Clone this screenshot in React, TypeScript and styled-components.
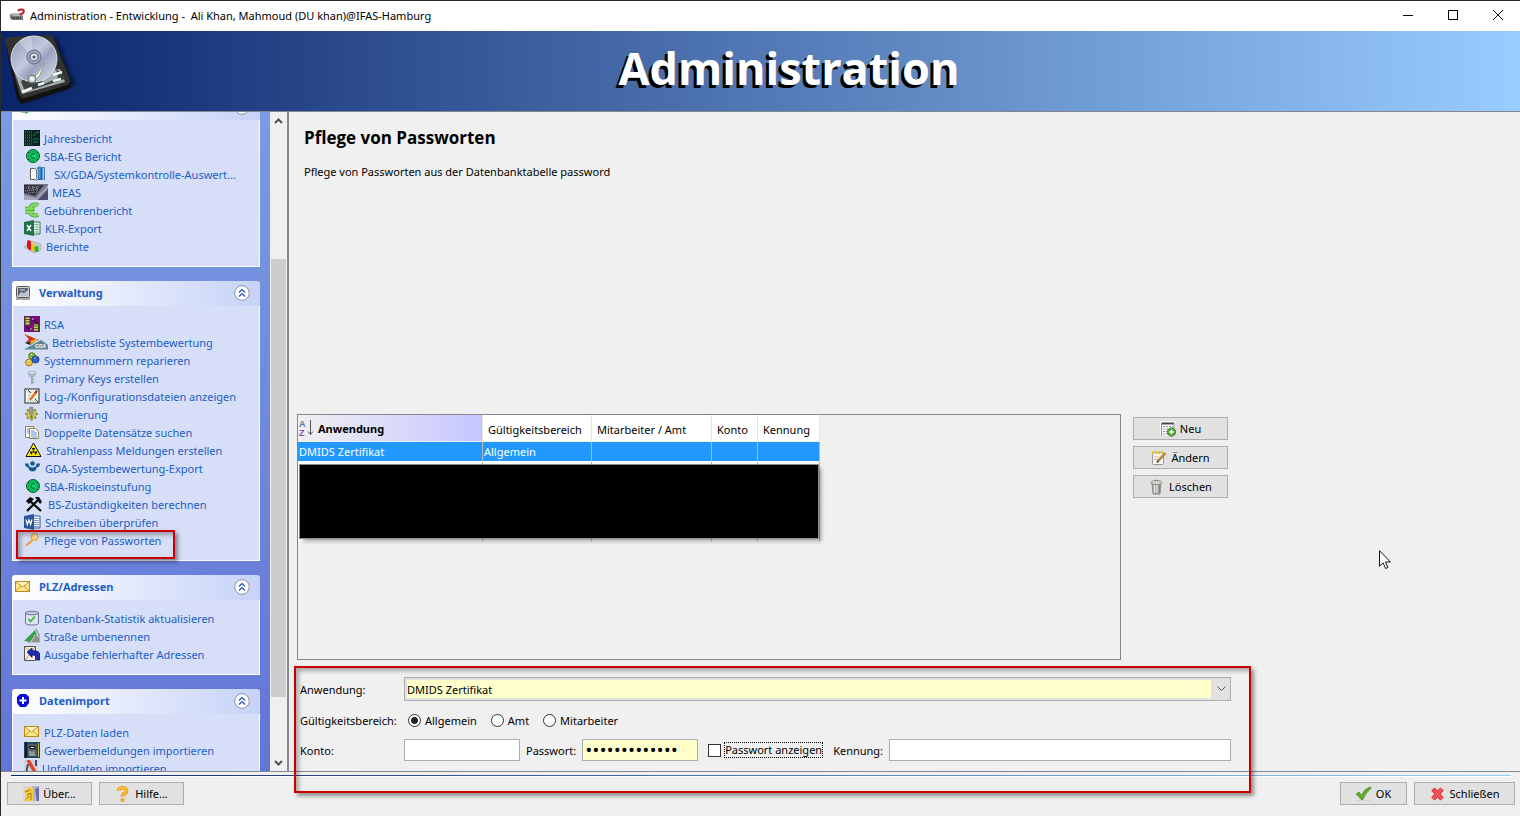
import React, { ReactNode, useLayoutEffect, useRef, useState } from 'react';
import styled, { createGlobalStyle } from 'styled-components';

const GlobalStyle = createGlobalStyle`
  * { box-sizing: border-box; }
  html, body { margin: 0; padding: 0; }
  body, button, input, select {
    font-family: "Noto Sans", "Open Sans", sans-serif;
    font-size: 11px;
    color: #000;
  }
`;

/* ---------- window frame ---------- */

const Window = styled.div`
  position: relative;
  display: flex;
  flex-direction: column;
  height: 100vh;
  min-height: 640px;
  overflow: hidden;
  background: #f0f0f0;
  border-top: 1px solid #2b2430;
  border-left: 1px solid #2b2b2b;
`;

const TitleBar = styled.header`
  display: flex;
  align-items: center;
  height: 30px;
  flex: none;
  padding: 0 0 2px 8px;
  gap: 5px;
  background: #fff;
  white-space: pre;
`;

const WindowControls = styled.div`
  display: flex;
  margin-left: auto;
`;

const WindowButton = styled.button`
  display: grid;
  place-items: center;
  width: 45px;
  height: 28px;
  padding: 0;
  border: 0;
  background: transparent;
`;

const Banner = styled.div`
  position: relative;
  display: flex;
  align-items: center;
  justify-content: center;
  height: 81px;
  flex: none;
  padding-bottom: 6px;
  border-bottom: 1px solid #828790;
  background: linear-gradient(to right, #0a246a, #99ccff);
`;

const BannerImage = styled.div`
  position: absolute;
  left: 0;
  top: 0;
`;

const BannerTitle = styled.h1`
  margin: 0;
  padding-left: 57px;
  font-family: "Open Sans", "Noto Sans", sans-serif;
  font-size: 45px;
  line-height: 74px;
  font-weight: 700;
  color: #fff;
  text-shadow: -3px 3px 0 #000;
`;

/* ---------- body ---------- */

const Body = styled.div`
  display: flex;
  flex: 1;
  min-height: 0;
`;

const Sidebar = styled.nav`
  display: flex;
  flex: none;
  width: 288px;
  border-right: 2px solid #828790;
`;

const TaskPane = styled.div`
  flex: 1;
  overflow: hidden;
  padding: 12px 10px 12px 11px;
  display: flex;
  flex-direction: column;
  gap: 14px;
  background: linear-gradient(to bottom, #7a9ae3, #6375d6);
`;

const ScrollBar = styled.div`
  display: flex;
  flex-direction: column;
  width: 17px;
  background: #f0f0f0;
`;

const ScrollArrow = styled.button`
  display: grid;
  place-items: center;
  height: 17px;
  padding: 0;
  border: 0;
  background: transparent;
`;

const ScrollTrack = styled.div`
  display: grid;
  flex: 1;
  padding: 0 1px;
  grid-template-rows: 130fr 438fr 57fr;
`;

const ScrollThumb = styled.div`
  grid-row: 2;
  background: #cdcdcd;
`;

const Group = styled.section`
  flex: none;
`;

const GroupHeader = styled.h2`
  display: flex;
  align-items: center;
  height: 25px;
  margin: 0;
  padding: 0 10px 1px 3px;
  gap: 8px;
  border-radius: 3px 3px 0 0;
  background: linear-gradient(to right, #fff, #c6d3f7);
  font-size: 11px;
  line-height: 18px;
  font-weight: 700;
  color: #215dc6;
`;

const CollapseButton = styled.button`
  display: grid;
  margin-left: auto;
  padding: 0;
  border: 0;
  background: transparent;
`;

const GroupBody = styled.ul`
  margin: 0;
  padding: 10px 0 10px 11px;
  list-style: none;
  border: 1px solid #fff;
  border-top: 0;
  background: #d6dff7;
`;

const Task = styled.li`
  position: relative;
  height: 18px;
`;

const TaskLink = styled.a`
  display: flex;
  gap: 4px;
  line-height: 18px;
  white-space: nowrap;
  color: #215dc6;
  text-decoration: none;
  svg { flex: none; }
`;

const Mark = styled.div`
  position: absolute;
  z-index: 2;
  border: 2px solid #c80000;
  box-shadow: 3px 3px 4px rgba(0, 0, 0, 0.4), inset 3px 3px 4px rgba(0, 0, 0, 0.3);
  pointer-events: none;
`;

const TaskMark = styled(Mark)`
  left: -8px;
  top: -2px;
  width: 159px;
  height: 29px;
`;

/* ---------- main ---------- */

const Main = styled.main`
  display: flex;
  flex-direction: column;
  flex: 1;
  min-width: 0;
  padding: 14px 20px 10px 8px;
`;

const Intro = styled.div`
  flex: 1;
  padding-left: 7px;
`;

const PageTitle = styled.h2`
  margin: 0;
  font-family: "Open Sans", "Noto Sans", sans-serif;
  font-size: 17px;
  line-height: 24px;
  font-weight: 700;
`;

const Description = styled.p`
  margin: 14px 0 0;
  line-height: 16px;
`;

const ListArea = styled.div`
  display: flex;
  gap: 12px;
`;

const TableBox = styled.div`
  position: relative;
  flex: 0 1 824px;
  height: 246px;
  border: 1px solid #828790;
`;

const Table = styled.table`
  border-collapse: separate;
  border-spacing: 0;
  table-layout: fixed;
  width: 522px;
`;

const HeadCell = styled.th<{ $sorted?: boolean }>`
  height: 27px;
  padding: ${p => (p.$sorted ? '0 0 0 1px' : '2px 0 0 5px')};
  text-align: left;
  white-space: nowrap;
  font-weight: ${p => (p.$sorted ? 700 : 400)};
  background: ${p => (p.$sorted ? 'linear-gradient(to right, #f0f0f0, #c6c6ff)' : '#fff')};
  border-right: 1px solid #e5e5e5;
  border-bottom: 1px solid #f0f0f0;
`;

const SortLabel = styled.span`
  display: flex;
  align-items: center;
  gap: 4px;
`;

const Row = styled.tr<{ $selected?: boolean }>`
  height: 20px;
  color: ${p => (p.$selected ? '#fff' : '#000')};
  background: ${p => (p.$selected ? '#2199ff' : '#fff')};
`;

const Cell = styled.td`
  padding: 0 1px;
  line-height: 18px;
  border-right: 1px solid #b8b8b8;
  border-bottom: 1px solid #fff;
`;

const BlackedOut = styled.div`
  position: absolute;
  left: 2px;
  top: 50px;
  width: 518px;
  height: 73px;
  background: #000;
  box-shadow: 0 0 0 1px #8c8c8c, 3px 3px 4px rgba(0, 0, 0, 0.4);
`;

const ButtonColumn = styled.div`
  display: flex;
  flex-direction: column;
  gap: 6px;
  padding-top: 3px;
`;

const PushButton = styled.button<{ $width: number }>`
  display: flex;
  align-items: center;
  justify-content: center;
  gap: 4px;
  width: ${p => p.$width}px;
  height: 23px;
  padding: 0;
  border: 1px solid #adadad;
  background: #e1e1e1;
`;

const Form = styled.form`
  position: relative;
  display: grid;
  grid-template-columns: 104px 1fr;
  align-items: center;
  row-gap: 8px;
  max-width: 934px;
  margin-top: 17px;
  padding-left: 3px;
`;

const FormMark = styled(Mark)`
  left: -3px;
  right: -20px;
  top: -11px;
  bottom: -32px;
`;

const FormRow = styled.div`
  display: flex;
  align-items: center;
  height: 22px;
`;

const ComboWrap = styled.div`
  position: relative;
  display: flex;
  height: 24px;
  border: 1px solid #adadad;
  background: #e1e1e1;
  padding: 2px;
`;

const Combo = styled.select`
  flex: 1;
  appearance: none;
  border: 0;
  border-radius: 0;
  padding: 0;
  height: 18px;
  background: linear-gradient(#ffffcc, #ffffcc) left / calc(100% - 17px) 100% no-repeat;
`;

const ComboArrow = styled.svg`
  position: absolute;
  right: 4px;
  top: 8px;
  pointer-events: none;
`;

const Choice = styled.label<{ $indent?: boolean }>`
  display: flex;
  align-items: center;
  gap: 4px;
  margin: 0 ${p => (p.$indent ? 5 : 10)}px 0 ${p => (p.$indent ? 10 : 4)}px;
  white-space: nowrap;
`;

const Radio = styled.input`
  appearance: none;
  width: 13px;
  height: 13px;
  margin: 0;
  border: 1px solid #333;
  border-radius: 50%;
  background: #fff;
  &:checked { background: radial-gradient(circle, #222 3px, #fff 4px); }
`;

const CheckBox = styled.input`
  appearance: none;
  width: 13px;
  height: 13px;
  margin: 0;
  border: 1px solid #333;
  background: #fff;
`;

const FocusedText = styled.span`
  outline: 1px dotted #000;
  line-height: 14px;
`;

const TextField = styled.input<{ $required?: boolean; $grow?: boolean }>`
  ${p => (p.$grow ? 'flex: 1; min-width: 0;' : 'width: 116px;')}
  height: 22px;
  padding: 0 2px;
  border: 1px solid #abadb3;
  border-radius: 0;
  background: ${p => (p.$required ? '#ffffcc' : '#fff')};
  &[type='password'] {
    font-family: "Open Sans", sans-serif;
    font-size: 19px;
  }
`;

const FieldLabel = styled.label<{ $inline?: boolean }>`
  white-space: nowrap;
  margin: ${p => (p.$inline ? '0 6px' : '0')};
`;

/* ---------- footer ---------- */

const Footer = styled.footer`
  flex: none;
  padding: 3px 5px 11px 6px;
  border-top: 1px solid #828790;
`;

const Rule = styled.div`
  height: 2px;
  margin: 0 4px 5px;
  background: linear-gradient(to right, #0a246a, #99ccff) top / 100% 1px no-repeat, #fff;
`;

const FooterButtons = styled.div`
  display: flex;
  gap: 7px;
`;

const Spring = styled.span`
  flex: 1;
`;

const Pointer = styled.svg`
  position: absolute;
  right: 128px;
  top: 549px;
`;

/* ---------- icons ---------- */

const Svg = ({ w = 16, h = 16, children }: { w?: number; h?: number; children: ReactNode }) => (
  <svg width={w} height={h} viewBox={`0 0 ${w} ${h}`} aria-hidden="true">{children}</svg>
);

const icons: Record<string, ReactNode> = {
  chip: (
    <Svg>
      <rect width="16" height="16" fill="#07241f" />
      <path d="M1.500 1v14M5.500 1v14" stroke="#0a7a4a" strokeDasharray="2 1" />
      <path d="M3.500 1v14" stroke="#c01818" strokeDasharray="3 1" />
      <path d="M7.500 1v14" stroke="#1c2fc0" />
      <path d="M9 6l3-3 3-1M9 9h6M9 12h5" stroke="#12806c" fill="none" />
    </Svg>
  ),
  seal: (
    <Svg>
      <circle cx="9" cy="8" r="6.500" fill="#0ccb62" stroke="#0b5c33" />
      <circle cx="9" cy="8" r="4.300" fill="#14d870" stroke="#0a8a46" strokeWidth=".8" />
      <path d="M10.800 6.400a2.300 2.300 0 1 0 0 3.200" stroke="#066a35" strokeWidth="1.200" fill="none" />
      <path d="M4 5l1-1M13 4l1 1M4 11l1 1M14 11l-1 1" stroke="#04361c" />
    </Svg>
  ),
  book: (
    <Svg w={26}>
      <path d="M6.500 2.500h4l2 1 1-1h4v11h-4l-1 1-1-1h-5z" fill="#fff" stroke="#5c5a4c" />
      <path d="M12.500 4v9" stroke="#777" />
      <path d="M8 5h3M8 7h3M8 9h3" stroke="#e2e2da" />
      <path d="M14 1h3v13l-1.500-1.500L14 14z" fill="#4a9ae6" stroke="#155a9c" strokeWidth=".7" />
      <path d="M18 1.500h2.500V14L19 12.500 18 13.500z" fill="#9cc9f2" stroke="#155a9c" strokeWidth=".7" />
    </Svg>
  ),
  keyboard: (
    <Svg w={24}>
      <rect width="24" height="16" fill="#77778b" />
      <path d="M0 1h20L11 12 0 9z" fill="#34343f" />
      <path d="M2 4l14-1M1 7l13-2M4 9l9-1M5 2v5M9 2v6M13 2v5" stroke="#9a9aab" strokeDasharray="1 1" />
      <path d="M0 11l12 3L24 1v3L13 16H0z" fill="#a3a4bd" />
      <path d="M14 16L24 6v10z" fill="#4c4c70" />
    </Svg>
  ),
  euro: (
    <Svg>
      <path d="M14 3.500A5.500 5.500 0 1 0 14 12.500M1 6.700h10M1 9.700h9" stroke="#4aa335" strokeWidth="4" fill="none" />
      <path d="M14 3.500A5.500 5.500 0 1 0 14 12.500M1 6.700h10M1 9.700h9" stroke="#86d766" strokeWidth="2.600" fill="none" />
      <path d="M4 8.200h6" stroke="#3f9c2c" strokeWidth=".6" />
    </Svg>
  ),
  excel: (
    <Svg w={17}>
      <path d="M9 2h7v12H9z" fill="#fff" stroke="#1f7346" />
      <path d="M10 4.500h5M10 7h5M10 9.500h5M10 12h5M13 3v10" stroke="#7fb898" />
      <path d="M0 2l10-2v16L0 14z" fill="#1f7346" />
      <path d="M3 5l4 6M7 5l-4 6" stroke="#fff" strokeWidth="1.400" />
    </Svg>
  ),
  chart: (
    <Svg w={18}>
      <path d="M0 9l8-6 9 3v6l-7 3z" fill="#c9c7c7" stroke="#a9a7a7" strokeWidth=".6" />
      <path d="M3 9V3.500q1.500-3 4 0V12q-2 1-4-3z" fill="#d8141c" />
      <path d="M7 11V6.500q1.500-2 3.500 0V13q-2 1-3.500-2z" fill="#f2c410" />
      <path d="M10.500 13V9q2-2 4 0v4.500q-2 1.500-4-.5z" fill="#2fb32b" />
    </Svg>
  ),
  monitor: (
    <Svg>
      <rect x="1.500" y="1.500" width="13" height="11" rx="1" fill="#d2d2cf" stroke="#555" />
      <rect x="3" y="3" width="10" height="8" fill="#5b616b" />
      <path d="M3 11l3-4 3 1 4-3v6z" fill="#b9c4cf" />
      <path d="M5 5h5" stroke="#dfe7ee" />
      <path d="M1 14h14" stroke="#8a8a84" strokeWidth="1.500" />
    </Svg>
  ),
  rsa: (
    <Svg>
      <rect width="16" height="16" fill="#7a0a80" />
      <rect x="1" y="1" width="5" height="8" fill="#c6cf66" stroke="#32400a" strokeWidth=".8" />
      <rect x="9.500" y="8" width="5" height="7" fill="#c6cf66" stroke="#32400a" strokeWidth=".8" />
      <path d="M1 3.500h5M1 6h5M9.500 10h5M9.500 12.500h5" stroke="#4f5c14" />
      <path d="M8 3l6 4M2 11l5 3" stroke="#111" />
      <path d="M8 3h1.500M6 13h1.500" stroke="#fff" />
    </Svg>
  ),
  gda: (
    <Svg w={24}>
      <path d="M1 9l14-4-9 6z" fill="#111" />
      <path d="M3 1l11 5-9 5 3-5z" fill="#f3c313" />
      <path d="M0 0l12 5-11 4 4-4z" fill="#e0261c" />
      <path d="M0 15.500L17 6l7 5v4.500z" fill="#5c8792" />
      <text x="11" y="14" fontFamily="Liberation Sans" fontSize="5" fontWeight="700" fill="#fff">GDA</text>
    </Svg>
  ),
  cubes: (
    <Svg>
      <circle cx="8" cy="4" r="3.300" fill="#86bd2b" stroke="#476f12" strokeWidth=".8" />
      <circle cx="5" cy="10.500" r="3.500" fill="#ecc33c" stroke="#8c6a10" strokeWidth=".8" />
      <circle cx="11.500" cy="7.500" r="3.600" fill="#2e65c8" stroke="#123a86" strokeWidth=".8" />
      <path d="M7 3l1-1M4 9l1-1M10.500 6.500l1-1" stroke="#fff" />
    </Svg>
  ),
  key: (
    <Svg>
      <rect x="4" y="1" width="8" height="6" rx="2" fill="#a4bdc4" />
      <rect x="6" y="2" width="4" height="1.500" fill="#dce6ec" />
      <path d="M7 7h2v7H7z" fill="#93abb2" />
      <path d="M9 9.500h1.500M9 12h1.500" stroke="#93abb2" />
    </Svg>
  ),
  log: (
    <Svg>
      <rect x="1" y="1" width="14" height="14" fill="#fff" stroke="#222" />
      <path d="M3 4h10M3 7h10M3 10h10M3 13h10M5 2v12" stroke="#a8ccb4" strokeWidth=".7" />
      <path d="M4 2l3 3M11 11l3 3" stroke="#333" />
      <path d="M6 12l6-8" stroke="#e5761c" strokeWidth="2.500" />
      <path d="M11.500 5L13 2.500" stroke="#a52a12" strokeWidth="2" />
    </Svg>
  ),
  gear: (
    <Svg>
      <path d="M7.500 1.500v13M1 8h13M3 3.500l9 9M12 3.500l-9 9" stroke="#8f8a2c" strokeWidth="2.200" />
      <circle cx="7.500" cy="8" r="4.800" fill="#cfc95a" stroke="#8f8a2c" strokeWidth=".6" />
      <rect x="5.500" y="1" width="3.500" height="7.500" rx="1" fill="#9a9a96" stroke="#6d6d68" strokeWidth=".5" />
      <circle cx="7.500" cy="10.500" r="1.200" fill="#6e691f" />
    </Svg>
  ),
  pages: (
    <Svg>
      <path d="M1.500 2.500h8v11h-8z" fill="#fff" stroke="#8b8750" />
      <path d="M5.500 4.500h6l3 3v7h-9z" fill="#fffef0" stroke="#8b8750" />
      <path d="M7 7h4M7 9h6M7 11h6M7 13h6M3 5h2M3 7h2M3 9h2" stroke="#5c8de0" />
    </Svg>
  ),
  radiation: (
    <Svg w={18}>
      <path d="M9.500 1L17 14.500H2z" fill="#ffe60a" stroke="#111" strokeLinejoin="round" />
      <path d="M9.500 9.500L7.800 6h3.400zM9.500 9.500H5.600l1.700 3.600zM9.500 9.500h3.900l-1.700 3.600z" fill="#111" />
      <circle cx="9.500" cy="9.500" r="1.200" fill="#111" stroke="#ffe60a" strokeWidth=".6" />
    </Svg>
  ),
  dguv: (
    <Svg w={17}>
      <path d="M1 3.500h3.500q0 4 4 4t4-4H16q0 3.500-3.300 4-.7 4-4.200 4T4.300 7.500Q1 7 1 3.500z" fill="#155a8c" />
      <circle cx="8.500" cy="3.500" r="2.300" fill="#155a8c" />
    </Svg>
  ),
  hammers: (
    <Svg w={20}>
      <path d="M5 4l12 11M14 4L3 15" stroke="#0a0a0a" strokeWidth="2.200" />
      <path d="M2 5l4-4 4 2-5 5zM11 1h4l3 5-2 2z" fill="#0a0a0a" />
    </Svg>
  ),
  word: (
    <Svg w={17}>
      <path d="M9 2h7v12H9z" fill="#fff" stroke="#2b579a" />
      <path d="M10 4.500h5M10 6.500h5M10 8.500h5M10 10.500h5M10 12.500h5" stroke="#7d9ccd" />
      <path d="M0 2l10-2v16L0 14z" fill="#2b579a" />
      <path d="M2 5.500l1.300 5L5 6l1.600 4.500L8 5.500" stroke="#fff" strokeWidth="1.200" fill="none" />
    </Svg>
  ),
  goldKey: (
    <Svg>
      <path d="M2 13.500l7-6" stroke="#e9a04a" strokeWidth="2" />
      <path d="M3 12l1.500 2M5 10l1.500 2" stroke="#e9a04a" />
      <circle cx="10.500" cy="5" r="3.500" fill="#fbcf7c" stroke="#e9993a" />
      <circle cx="11.500" cy="4" r="1.100" fill="#fff3d6" />
    </Svg>
  ),
  mail: (
    <Svg>
      <rect x=".5" y="2.500" width="14" height="10" fill="#ffe68a" stroke="#b98a1c" />
      <path d="M1 3l6.500 5L14 3M1 12l5-5M14 12L9 7" stroke="#c9962a" fill="none" />
      <path d="M2 3h11L7.500 7z" fill="#fff8cf" />
    </Svg>
  ),
  database: (
    <Svg>
      <path d="M1.500 3v10q0 2 6.500 2t6.500-2V3z" fill="#dfe3f2" stroke="#6f7695" />
      <ellipse cx="8" cy="3" rx="6.500" ry="1.800" fill="#c3c9de" stroke="#6f7695" />
      <path d="M4.500 9l2 2.500L11 6.500" stroke="#27b834" strokeWidth="1.600" fill="none" />
    </Svg>
  ),
  road: (
    <Svg>
      <path d="M3 14.500L9 6l4 .5 2.500 8z" fill="#8c948c" />
      <path d="M0 13l5-5 6-6 1.500 4-7 7.500z" fill="#2fa545" />
      <path d="M12 1l3 6v7" stroke="#73816c" fill="none" />
      <path d="M7 14l4-7" stroke="#e5e8e2" strokeDasharray="2 1" />
    </Svg>
  ),
  returnMail: (
    <Svg>
      <path d="M.5.500h11v14H.5z" fill="#fbf3e1" stroke="#555" />
      <path d="M1 1l6 5 4-5M1 14l5-6" stroke="#a89472" fill="none" />
      <path d="M3 6l5-4v2.500q8 0 8 4.500v5h-4q1-5-4-5v2.500z" fill="#1b2cb8" stroke="#0a1060" strokeWidth=".7" />
    </Svg>
  ),
  plus: (
    <Svg>
      <path d="M5 1h6l3 3v6l-3 4H5l-3-4V4z" fill="#0a0ad8" />
      <path d="M8 4v7M4.500 7.500h7" stroke="#fff" strokeWidth="2" />
    </Svg>
  ),
  trade: (
    <Svg>
      <rect width="16" height="16" fill="#22465c" />
      <path d="M2 0v16" stroke="#0b1e2c" strokeWidth="2" />
      <rect x="4" y="2" width="9" height="12" fill="#4d5a60" />
      <path d="M5 14V8l3 2 2-2 2 6z" fill="#8f989b" />
      <path d="M5 4h6l1 3H6z" fill="#1c1f22" />
      <path d="M7 5.500h3" stroke="#fff" />
      <path d="M14.500 1v14" stroke="#b9c24b" />
    </Svg>
  ),
  accident: (
    <Svg w={14}>
      <rect width="14" height="16" fill="#cfd3dc" />
      <path d="M4 0l8 14" stroke="#e0452b" strokeWidth="3.500" />
      <path d="M1.500 16L4 4M12 0v6" stroke="#444c66" strokeWidth="2" />
    </Svg>
  ),
  reports: (
    <Svg>
      <path d="M4 9h9l-3 5H6z" fill="#b9bcc4" />
      <path d="M8 11l6-1v3l-3 2z" fill="#39b54a" />
    </Svg>
  ),
  add: (
    <Svg>
      <rect x=".5" y=".5" width="14" height="14" fill="#fff" stroke="#f6f6f6" />
      <path d="M2 2.500h12" stroke="#3d4759" strokeWidth="2" />
      <path d="M3 5.500h10M3 8h8M3 10.500h6M3 13h5" stroke="#8a93a5" strokeDasharray="2 1" />
      <path d="M1.500 2v13M14 2v7" stroke="#8a93a5" />
      <circle cx="11.500" cy="11" r="4.300" fill="#4f9c2f" stroke="#33701b" strokeWidth=".6" />
      <path d="M11.500 8.500v5M9 11h5" stroke="#fff" strokeWidth="1.500" />
    </Svg>
  ),
  edit: (
    <Svg>
      <rect x="1.500" y="2.500" width="11" height="12" rx="1" fill="#f4f4f0" stroke="#9a9a92" />
      <path d="M1 2.500h12" stroke="#e8c53a" strokeWidth="3" strokeDasharray="2 1" />
      <path d="M3 7h5M3 9.500h4" stroke="#c0c0ba" />
      <path d="M7 11l7.500-8" stroke="#b9812e" strokeWidth="2.500" />
      <path d="M6 12.500l1.500-2" stroke="#333" strokeWidth="1.500" />
    </Svg>
  ),
  trash: (
    <Svg>
      <path d="M3 4h9l-1 11H4z" fill="#a9a9a4" stroke="#7c7c78" strokeWidth=".8" />
      <path d="M5.500 6v8M8 6v8" stroke="#e9e9e6" strokeWidth="1.200" />
      <path d="M10.200 6v8" stroke="#7d7d79" />
      <ellipse cx="7.500" cy="3.500" rx="5.500" ry="2" fill="#d5d5d2" stroke="#7c7c78" strokeWidth=".8" />
      <path d="M6 2q1.500-2 3 0" stroke="#7c7c78" fill="none" />
    </Svg>
  ),
  about: (
    <Svg>
      <rect x="0" y="0" width="16" height="16" fill="#d9d9dd" />
      <path d="M9 0h7v15h-5z" fill="#b3b3d2" />
      <path d="M12 3l2 12h2V1z" fill="#6b6ba8" />
      <path d="M1 5l5-4 5 1-1 5 1 8H1l2-6z" fill="#f2cb3d" />
      <path d="M2 6l5-2M4 9l4-2v7M3 13l3-3" stroke="#9d7b1a" fill="none" />
    </Svg>
  ),
  help: (
    <Svg>
      <path d="M3.500 5q0-3 4-3t4 3q0 1.800-2 2.700T7.500 10.500" stroke="#d98a10" strokeWidth="3.600" fill="none" />
      <path d="M3.500 5q0-3 4-3t4 3q0 1.800-2 2.700T7.500 10.500" stroke="#fdbb30" strokeWidth="2.600" fill="none" />
      <circle cx="7.500" cy="14" r="1.800" fill="#fdb428" stroke="#d98a10" strokeWidth=".5" />
    </Svg>
  ),
  ok: (
    <Svg>
      <path d="M1 14.500h13" stroke="#cfcfcf" />
      <path d="M0 8l3-2 2.500 3Q8 3 14 1l1.500 1Q10 6 7 13.500H5Q3.500 11 0 8z" fill="#5fae2b" stroke="#3d8416" strokeWidth=".6" />
    </Svg>
  ),
  cancel: (
    <Svg>
      <path d="M3 3l9 10M12 3L3 13" stroke="#c21f24" strokeWidth="4.600" strokeLinejoin="round" />
      <path d="M3 3l9 10M12 3L3 13" stroke="#f0555a" strokeWidth="3.200" />
    </Svg>
  ),
};

const HardDisk = () => (
  <svg width="78" height="80" viewBox="0 0 78 80" aria-hidden="true">
    <defs>
      <linearGradient id="platter" x1="0" y1="0" x2="1" y2="1">
        <stop offset="0" stopColor="#8d96b4" />
        <stop offset=".45" stopColor="#c3c9dc" />
        <stop offset=".6" stopColor="#9aa2c0" />
        <stop offset="1" stopColor="#dfe4ee" />
      </linearGradient>
      <filter id="soft"><feGaussianBlur stdDeviation="2" /></filter>
    </defs>
    <path d="M9 12L55 7l19 47-50 17z" fill="#020a24" filter="url(#soft)" opacity=".8" />
    <path d="M4 10q0-3 4-4l40-2q3 0 5 4l16 41q1 4-3 6L24 68q-4 1-6-4z" fill="#34322f" />
    <path d="M4 10l14 53q2 5 6 4l42-13q4-2 3-5l1 5q0 3-3 4L24 72q-5 2-8-4z" fill="#111" />
    <path d="M13 40l8 23 43-12-5-13-22 3z" fill="#a2afb0" />
    <path d="M20 50l8-5 4 6 8-4 3 6 14-6-2-8 6 2 3 7-40 13z" fill="#3d4443" />
    <path d="M21 61l10-4M52 44l9-3M37 54l6-2M52 50l8-2" stroke="#f1f8ee" strokeWidth="2.500" />
    <circle cx="33" cy="28" r="23" fill="url(#platter)" stroke="#dce1ee" />
    <path d="M33 28L18 11a23 23 0 0 1 12-6z" fill="#e3e7f0" opacity=".4" />
    <circle cx="33" cy="26" r="7" fill="#9ba4ba" stroke="#666f87" />
    <circle cx="33" cy="26" r="4" fill="#dde3e9" stroke="#67706f" />
    <circle cx="33" cy="26" r="1.500" fill="#4e565f" />
    <path d="M31 48l5-5 7-11-4 12-5 6z" fill="#e5ecda" stroke="#8a937d" strokeWidth=".7" />
    <circle cx="31" cy="48" r="4" fill="#cbd5d0" stroke="#687270" />
    <circle cx="31" cy="48" r="1.500" fill="#fff" />
  </svg>
);

const Chevrons = () => (
  <Svg>
    <circle cx="8" cy="8" r="7.300" fill="#fff" stroke="#8b90a8" />
    <path d="M5 7.500l3-3 3 3M5 11.500l3-3 3 3" stroke="#1d4fb4" strokeWidth="1.200" fill="none" />
  </Svg>
);

/* ---------- data ---------- */

type TaskEntry = { icon: string; label: string; marked?: boolean };
type TaskGroup = { icon: string; title: string; tasks: TaskEntry[] };

const groups: TaskGroup[] = [
  {
    icon: 'reports',
    title: '',
    tasks: [
      { icon: 'chip', label: 'Jahresbericht' },
      { icon: 'seal', label: 'SBA-EG Bericht' },
      { icon: 'book', label: 'SX/GDA/Systemkontrolle-Auswert...' },
      { icon: 'keyboard', label: 'MEAS' },
      { icon: 'euro', label: 'Gebührenbericht' },
      { icon: 'excel', label: 'KLR-Export' },
      { icon: 'chart', label: 'Berichte' },
    ],
  },
  {
    icon: 'monitor',
    title: 'Verwaltung',
    tasks: [
      { icon: 'rsa', label: 'RSA' },
      { icon: 'gda', label: 'Betriebsliste Systembewertung' },
      { icon: 'cubes', label: 'Systemnummern reparieren' },
      { icon: 'key', label: 'Primary Keys erstellen' },
      { icon: 'log', label: 'Log-/Konfigurationsdateien anzeigen' },
      { icon: 'gear', label: 'Normierung' },
      { icon: 'pages', label: 'Doppelte Datensätze suchen' },
      { icon: 'radiation', label: 'Strahlenpass Meldungen erstellen' },
      { icon: 'dguv', label: 'GDA-Systembewertung-Export' },
      { icon: 'seal', label: 'SBA-Riskoeinstufung' },
      { icon: 'hammers', label: 'BS-Zuständigkeiten berechnen' },
      { icon: 'word', label: 'Schreiben überprüfen' },
      { icon: 'goldKey', label: 'Pflege von Passworten', marked: true },
    ],
  },
  {
    icon: 'mail',
    title: 'PLZ/Adressen',
    tasks: [
      { icon: 'database', label: 'Datenbank-Statistik aktualisieren' },
      { icon: 'road', label: 'Straße umbenennen' },
      { icon: 'returnMail', label: 'Ausgabe fehlerhafter Adressen' },
    ],
  },
  {
    icon: 'plus',
    title: 'Datenimport',
    tasks: [
      { icon: 'mail', label: 'PLZ-Daten laden' },
      { icon: 'trade', label: 'Gewerbemeldungen importieren' },
      { icon: 'accident', label: 'Unfalldaten importieren' },
    ],
  },
];

const INITIAL_SCROLL = 29;

const TaskSidebar = () => {
  const pane = useRef<HTMLDivElement>(null);
  useLayoutEffect(() => {
    if (pane.current) pane.current.scrollTop = INITIAL_SCROLL;
  }, []);
  const scroll = (delta: number) => pane.current?.scrollBy(0, delta);

  return (
    <Sidebar>
      <TaskPane ref={pane}>
        {groups.map(group => (
          <Group key={group.icon}>
            <GroupHeader>
              {icons[group.icon]}
              {group.title}
              <CollapseButton type="button"><Chevrons /></CollapseButton>
            </GroupHeader>
            <GroupBody>
              {group.tasks.map(task => (
                <Task key={task.label}>
                  <TaskLink href="#">{icons[task.icon]}{task.label}</TaskLink>
                  {task.marked && <TaskMark />}
                </Task>
              ))}
            </GroupBody>
          </Group>
        ))}
      </TaskPane>
      <ScrollBar>
        <ScrollArrow type="button" onClick={() => scroll(-18)}>
          <Svg w={9} h={6}><path d="M1 5l3.500-3.500L8 5" stroke="#505050" strokeWidth="2" fill="none" /></Svg>
        </ScrollArrow>
        <ScrollTrack><ScrollThumb /></ScrollTrack>
        <ScrollArrow type="button" onClick={() => scroll(18)}>
          <Svg w={9} h={6}><path d="M1 1l3.500 3.500L8 1" stroke="#505050" strokeWidth="2" fill="none" /></Svg>
        </ScrollArrow>
      </ScrollBar>
    </Sidebar>
  );
};

const PasswordTable = () => (
  <TableBox>
    <Table>
      <colgroup>
        <col style={{ width: 185 }} />
        <col style={{ width: 109 }} />
        <col style={{ width: 120 }} />
        <col style={{ width: 46 }} />
        <col style={{ width: 62 }} />
      </colgroup>
      <thead>
        <tr>
          <HeadCell $sorted>
            <SortLabel>
              <svg width="15" height="18" viewBox="0 0 15 18" aria-hidden="true">
                <text x="0" y="8" fontFamily="Liberation Sans" fontSize="9" fontWeight="700" fill="#4b7ba8">A</text>
                <text x="0" y="17" fontFamily="Liberation Sans" fontSize="9" fontWeight="700" fill="#8a4fa8">Z</text>
                <path d="M11.500 1v14M9 12.500l2.500 3 2.500-3" stroke="#555" fill="none" />
              </svg>
              Anwendung
            </SortLabel>
          </HeadCell>
          <HeadCell>Gültigkeitsbereich</HeadCell>
          <HeadCell>Mitarbeiter / Amt</HeadCell>
          <HeadCell>Konto</HeadCell>
          <HeadCell>Kennung</HeadCell>
        </tr>
      </thead>
      <tbody>
        <Row $selected><Cell>DMIDS Zertifikat</Cell><Cell>Allgemein</Cell><Cell /><Cell /><Cell /></Row>
        {[0, 1, 2, 3].map(i => (
          <Row key={i}><Cell /><Cell /><Cell /><Cell /><Cell /></Row>
        ))}
      </tbody>
    </Table>
    <BlackedOut />
  </TableBox>
);

const PasswordForm = () => {
  const [scope, setScope] = useState('Allgemein');
  const [shown, setShown] = useState(false);
  return (
    <Form>
      <FieldLabel htmlFor="app">Anwendung:</FieldLabel>
      <ComboWrap>
        <Combo id="app"><option>DMIDS Zertifikat</option></Combo>
        <ComboArrow width="9" height="6" viewBox="0 0 9 6"><path d="M.5.500l4 4 4-4" stroke="#555" fill="none" /></ComboArrow>
      </ComboWrap>
      <span>Gültigkeitsbereich:</span>
      <FormRow role="radiogroup">
        {['Allgemein', 'Amt', 'Mitarbeiter'].map(name => (
          <Choice key={name}>
            <Radio type="radio" name="scope" checked={scope === name} onChange={() => setScope(name)} />
            {name}
          </Choice>
        ))}
      </FormRow>
      <FieldLabel htmlFor="account">Konto:</FieldLabel>
      <FormRow>
        <TextField id="account" />
        <FieldLabel $inline htmlFor="password">Passwort:</FieldLabel>
        <TextField id="password" $required type={shown ? 'text' : 'password'} defaultValue="0000000000000" />
        <Choice $indent>
          <CheckBox type="checkbox" checked={shown} onChange={() => setShown(!shown)} />
          <FocusedText>Passwort anzeigen</FocusedText>
        </Choice>
        <FieldLabel $inline htmlFor="ident">Kennung:</FieldLabel>
        <TextField id="ident" $grow />
      </FormRow>
      <FormMark />
    </Form>
  );
};

export default function App() {
  return (
    <>
      <GlobalStyle />
      <Window>
        <TitleBar>
          <Svg>
            <path d="M1 7h10l3 2v4H3l-2-2z" fill="#777" />
            <path d="M1 7l3-1h9l1 3H4z" fill="#b5b5b5" />
            <path d="M3 11h9" stroke="#222" strokeDasharray="3 1" />
            <path d="M9 4q1-2 4-1.500T14 6l-3 2" stroke="#c4161c" strokeWidth="2" fill="none" />
          </Svg>
          <span>{'Administration - Entwicklung -  Ali Khan, Mahmoud (DU khan)@IFAS-Hamburg'}</span>
          <WindowControls>
            <WindowButton type="button"><Svg w={10} h={10}><path d="M0 5.500h10" stroke="#000" /></Svg></WindowButton>
            <WindowButton type="button"><Svg w={10} h={10}><rect x=".5" y=".5" width="9" height="9" fill="none" stroke="#000" /></Svg></WindowButton>
            <WindowButton type="button"><Svg w={10} h={10}><path d="M0 0l10 10M10 0L0 10" stroke="#000" /></Svg></WindowButton>
          </WindowControls>
        </TitleBar>
        <Banner>
          <BannerImage><HardDisk /></BannerImage>
          <BannerTitle>Administration</BannerTitle>
        </Banner>
        <Body>
          <TaskSidebar />
          <Main>
            <Intro>
              <PageTitle>Pflege von Passworten</PageTitle>
              <Description>Pflege von Passworten aus der Datenbanktabelle password</Description>
            </Intro>
            <ListArea>
              <PasswordTable />
              <ButtonColumn>
                <PushButton type="button" $width={95}>{icons.add}Neu</PushButton>
                <PushButton type="button" $width={95}>{icons.edit}Ändern</PushButton>
                <PushButton type="button" $width={95}>{icons.trash}Löschen</PushButton>
              </ButtonColumn>
            </ListArea>
            <PasswordForm />
          </Main>
        </Body>
        <Footer>
          <Rule />
          <FooterButtons>
            <PushButton type="button" $width={85}>{icons.about}Über...</PushButton>
            <PushButton type="button" $width={85}>{icons.help}Hilfe...</PushButton>
            <Spring />
            <PushButton type="button" $width={67}>{icons.ok}OK</PushButton>
            <PushButton type="button" $width={101}>{icons.cancel}Schließen</PushButton>
          </FooterButtons>
        </Footer>
        <Pointer width="13" height="20" viewBox="0 0 13 20" aria-hidden="true">
          <path d="M.5.700v15.500l3.600-3.400 2.500 5.700 2.300-1-2.500-5.500h5z" fill="#fff" stroke="#111" />
        </Pointer>
      </Window>
    </>
  );
}
